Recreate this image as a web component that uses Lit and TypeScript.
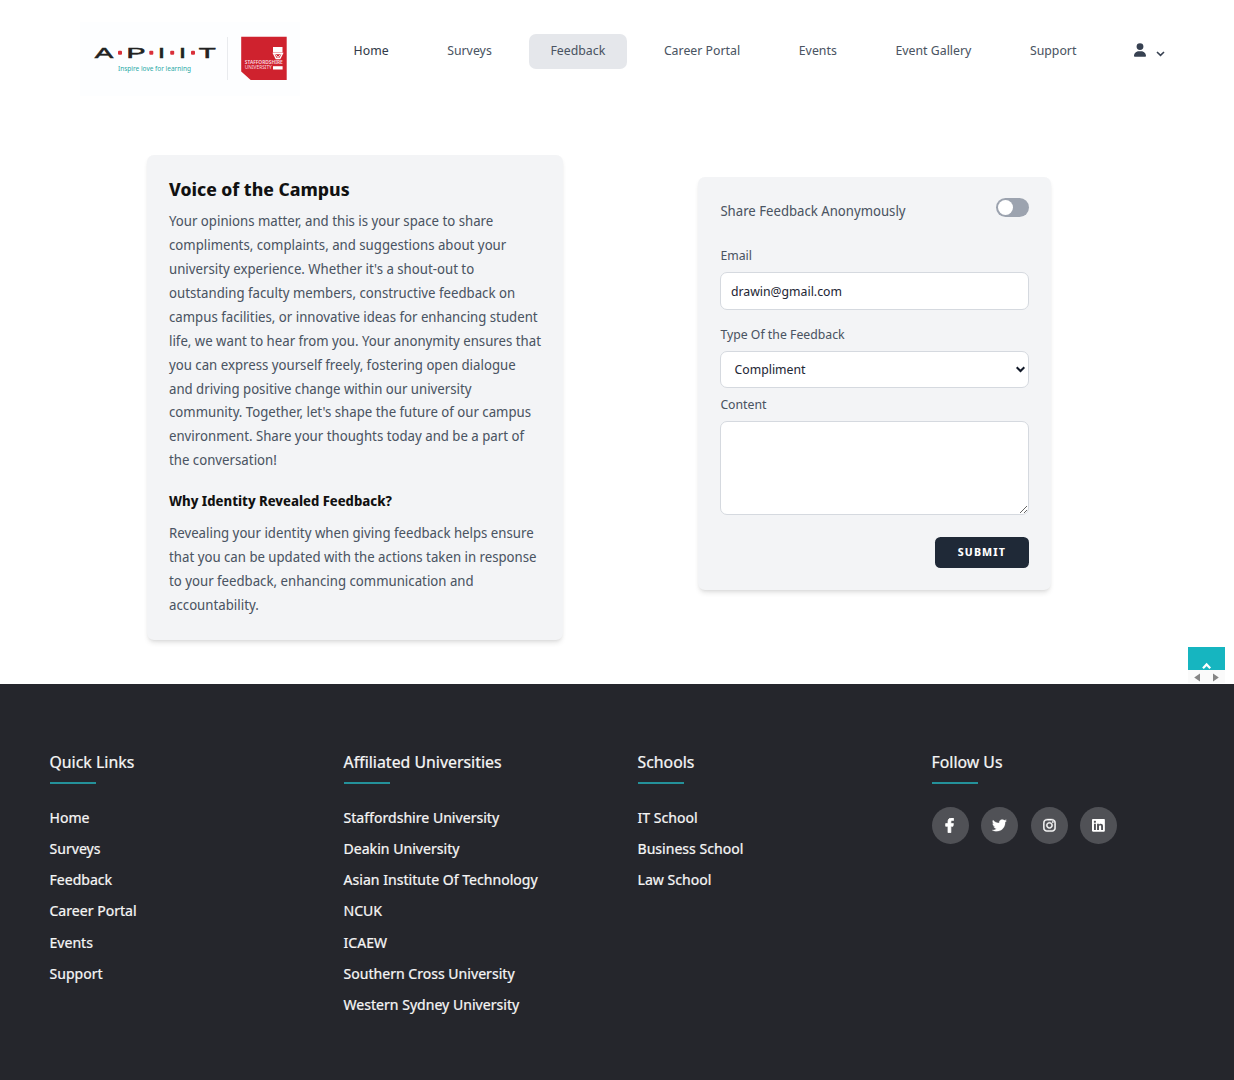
import { LitElement, html, css, svg } from "lit";
import { customElement, property } from "lit/decorators.js";
import { classMap } from "lit/directives/class-map.js";

const NAV = ["Home", "Surveys", "Feedback", "Career Portal", "Events", "Event Gallery", "Support"];

const FOOTER = [
  { title: "Quick Links", links: ["Home", "Surveys", "Feedback", "Career Portal", "Events", "Support"] },
  {
    title: "Affiliated Universities",
    links: [
      "Staffordshire University",
      "Deakin University",
      "Asian Institute Of Technology",
      "NCUK",
      "ICAEW",
      "Southern Cross University",
      "Western Sydney University",
    ],
  },
  { title: "Schools", links: ["IT School", "Business School", "Law School"] },
];

const SOCIAL = [
  {
    name: "Facebook",
    box: "0 0 320 512",
    weight: 26,
    d: "M279.14 288l14.22-92.66h-88.91v-60.13c0-25.35 12.42-50.06 52.24-50.06h40.42V6.26S260.43 0 225.36 0c-73.22 0-121.08 44.38-121.08 124.72v70.62H22.89V288h81.39v224h100.17V288z",
  },
  {
    name: "Twitter",
    box: "0 0 512 512",
    weight: 6,
    d: "M459.37 151.716c.325 4.548.325 9.097.325 13.645 0 138.72-105.583 298.558-298.558 298.558-59.452 0-114.68-17.219-161.137-47.106 8.447.974 16.568 1.299 25.34 1.299 49.055 0 94.213-16.568 130.274-44.832-46.132-.975-84.792-31.188-98.112-72.772 6.498.974 12.995 1.624 19.818 1.624 9.421 0 18.843-1.3 27.614-3.573-48.081-9.747-84.143-51.98-84.143-102.985v-1.299c13.969 7.797 30.214 12.67 47.431 13.319-28.264-18.843-46.781-51.005-46.781-87.391 0-19.492 5.197-37.36 14.294-52.954 51.655 63.675 129.3 105.258 216.365 109.807-1.624-7.797-2.599-15.918-2.599-24.04 0-57.828 46.782-104.934 104.934-104.934 30.213 0 57.502 12.67 76.67 33.137 23.715-4.548 46.456-13.32 66.599-25.34-7.798 24.366-24.366 44.833-46.132 57.827 21.117-2.273 41.584-8.122 60.426-16.243-14.292 20.791-32.161 39.308-52.628 54.253z",
  },
  {
    name: "Instagram",
    box: "-8 -8 464 528",
    weight: 16,
    d: "M224.1 141c-63.6 0-114.9 51.3-114.9 114.9s51.3 114.9 114.9 114.9S339 319.5 339 255.9 287.7 141 224.1 141zm0 189.6c-41.1 0-74.7-33.5-74.7-74.7s33.5-74.7 74.7-74.7 74.7 33.5 74.7 74.7-33.6 74.7-74.7 74.7zm146.4-194.3c0 14.9-12 26.8-26.8 26.8-14.9 0-26.8-12-26.8-26.8s12-26.8 26.8-26.8 26.8 12 26.8 26.8zm76.1 27.2c-1.7-35.9-9.9-67.7-36.2-93.9-26.2-26.2-58-34.4-93.9-36.2-37-2.1-147.9-2.1-184.9 0-35.8 1.7-67.6 9.9-93.9 36.1s-34.4 58-36.2 93.9c-2.1 37-2.1 147.9 0 184.9 1.7 35.9 9.9 67.7 36.2 93.9s58 34.4 93.9 36.2c37 2.1 147.9 2.1 184.9 0 35.9-1.7 67.7-9.9 93.9-36.2 26.2-26.2 34.4-58 36.2-93.9 2.1-37 2.1-147.8 0-184.8zM398.8 388c-7.8 19.6-22.9 34.7-42.6 42.6-29.5 11.7-99.5 9-132.1 9s-102.7 2.6-132.1-9c-19.6-7.8-34.7-22.9-42.6-42.6-11.7-29.5-9-99.5-9-132.1s-2.6-102.7 9-132.1c7.8-19.6 22.9-34.7 42.6-42.6 29.5-11.7 99.5-9 132.1-9s102.7-2.6 132.1 9c19.6 7.8 34.7 22.9 42.6 42.6 11.7 29.5 9 99.5 9 132.1s2.7 102.7-9 132.1z",
  },
  {
    name: "LinkedIn",
    box: "0 0 448 512",
    weight: 0,
    d: "M416 32H31.9C14.3 32 0 46.5 0 64.3v383.4C0 465.5 14.3 480 31.9 480H416c17.6 0 32-14.5 32-32.3V64.3c0-17.8-14.4-32.3-32-32.3zM135.4 416H69V202.2h66.5V416zm-33.2-243c-21.3 0-38.5-17.3-38.5-38.5S80.9 96 102.2 96c21.2 0 38.5 17.3 38.5 38.5 0 21.3-17.2 38.5-38.5 38.5zm282.1 243h-66.4V312c0-24.8-.5-56.7-34.5-56.7-34.6 0-39.9 27-39.9 54.9V416h-66.4V202.2h63.7v29.2h.9c8.9-16.8 30.6-34.5 62.9-34.5 67.2 0 79.7 44.3 79.7 101.9V416z",
  },
];

@customElement("site-logo")
class SiteLogo extends LitElement {
  static styles = css`
    :host { display: block; width: 220px; height: 74px; }
    svg { display: block; }
    .mark { font: 400 14.6px "Liberation Sans", sans-serif; fill: #222; stroke: #222; stroke-width: 0.5px; }
    .tag { font: 400 6.8px "Noto Sans", sans-serif; fill: #2aa9a6; }
    .uni { font: 600 4.5px "Noto Sans", sans-serif; fill: #fbdfe1; }
    .light { font-weight: 400; }
  `;
  render() {
    const letters: [string, number, number][] = [["A", 14.8, 18.5], ["P", 46.5, 19], ["I", 78, 7], ["I", 99, 7], ["T", 118.8, 17]];
    return html`<svg width="220" height="74" viewBox="0 0 220 74" role="img" aria-label="APIIT">
      <rect width="220" height="74" fill="#fdfeff" />
      ${letters.map(
        ([c, x, w]) => svg`<text class="mark" x=${x} y="36" textLength=${w} lengthAdjust="spacingAndGlyphs">${c}</text>`
      )}
      ${[40, 71.3, 92.2, 113].map((x) => svg`<rect x=${x - 2} y="28.8" width="4" height="4" rx="1" fill="#d9303a" />`)}
      <text class="tag" x="38" y="48.9" textLength="73" lengthAdjust="spacingAndGlyphs">Inspire love for learning</text>
      <path d="M147.5 15v43" stroke="#e9ebee" />
      <path d="M161.2 14.8h45.5v43.3h-36l-9.5-8.7z" fill="#cf222e" />
      <path d="M193 25h9.5v5.5H193z" fill="#fff" />
      <path d="M193.5 31.5h9l-2.6 5h-3.8z" fill="none" stroke="#fff" stroke-width="1.3" />
      <path d="M195.5 32.5l2.5 3 2.5-3" fill="none" stroke="#fff" />
      <path d="M193 44.2h9.6v3.3H193z" fill="#fff" />
      <text class="uni" x="164.8" y="42.4" textLength="38" lengthAdjust="spacingAndGlyphs">STAFFORDSHIRE</text>
      <text class="uni light" x="164.8" y="47.4" textLength="27" lengthAdjust="spacingAndGlyphs">UNIVERSITY</text>
    </svg>`;
  }
}

@customElement("site-header")
class SiteHeader extends LitElement {
  @property() active = "Feedback";
  static styles = css`
    :host { display: flex; align-items: flex-start; padding: 22px 0 0 80px; height: 133px; box-sizing: border-box; }
    nav { display: flex; margin: 12px 0 0 31.7px; gap: 14.8px; }
    a { height: 35px; line-height: 33px; padding: 0 21.9px; border-radius: 7px; font-size: 13.05px; color: #4b5563; white-space: nowrap; }
    .first { color: #333c4a; }
    .on { background: #e5e7eb; }
    .user { display: flex; align-items: center; gap: 9.7px; margin: 21px 0 0 36px; }
    .chev { margin-top: 7px; }
  `;
  render() {
    return html`<site-logo></site-logo>
      <nav>
        ${NAV.map((n, i) => html`<a class=${classMap({ on: n === this.active, first: i === 0 })}>${n}</a>`)}
      </nav>
      <div class="user">
        <svg width="12" height="14" viewBox="0 0 448 512" fill="#374151">
          <path d="M224 256a128 128 0 1 0 0-256 128 128 0 0 0 0 256zm-46 48C80 304 0 384 0 482c0 16 14 30 30 30h388c16 0 30-14 30-30 0-98-80-178-178-178z" />
        </svg>
        <svg class="chev" width="9" height="6" viewBox="0 0 9 6" fill="none" stroke="#374151" stroke-width="1.6"><path d="M1 1l3.5 3.3L8 1" /></svg>
      </div>`;
  }
}

@customElement("campus-info")
class CampusInfo extends LitElement {
  static styles = css`
    :host { display: block; box-sizing: border-box; width: 416px; height: 485px; padding: 21px 20px 0 21.7px; background: #f3f4f6; border-radius: 7px;
      box-shadow: 0 3.7px 5.5px -1px rgba(0, 0, 0, 0.1), 0 1.8px 3.7px -2px rgba(0, 0, 0, 0.1); }
    h1, h2, p { margin: 0; }
    h1 { font-size: 18.65px; line-height: 26px; color: #111; }
    p { font-size: 14px; line-height: 23.9px; color: #4b5563; margin-top: 7.2px; }
    h2 { font-size: 13.9px; line-height: 22px; color: #111; margin-top: 17.4px; }
    h2 + p { margin-top: 9.9px; }
  `;
  render() {
    return html`<h1>Voice of the Campus</h1>
      <p>
        Your opinions matter, and this is your space to share<br />compliments, complaints, and suggestions about your<br />university
        experience. Whether it's a shout-out to<br />outstanding faculty members, constructive feedback on<br />campus facilities, or
        innovative ideas for enhancing student<br />life, we want to hear from you. Your anonymity ensures that<br />you can express
        yourself freely, fostering open dialogue<br />and driving positive change within our university<br />community. Together,
        let's shape the future of our campus<br />environment. Share your thoughts today and be a part of<br />the conversation!
      </p>
      <h2>Why Identity Revealed Feedback?</h2>
      <p>
        Revealing your identity when giving feedback helps ensure<br />that you can be updated with the actions taken in response<br />to
        your feedback, enhancing communication and<br />accountability.
      </p>`;
  }
}

@customElement("feedback-form")
class FeedbackForm extends LitElement {
  static styles = css`
    :host { display: flex; flex-direction: column; box-sizing: border-box; width: 352.5px; height: 413px; padding: 21px 22px 22px; background: #f3f4f6; border-radius: 7px;
      box-shadow: 0 3.7px 5.5px -1px rgba(0, 0, 0, 0.1), 0 1.8px 3.7px -2px rgba(0, 0, 0, 0.1); }
    .top { display: flex; justify-content: space-between; font-size: 13.96px; line-height: 26px; color: #4b5563; }
    .switch { box-sizing: border-box; width: 33px; height: 19px; padding: 2px; border-radius: 10px; background: #9ca3af; }
    .knob { width: 15px; height: 15px; border-radius: 50%; background: #fff; }
    label { display: block; font-size: 13px; line-height: 20px; color: #4b5563; }
    .l1 { margin-top: 21px; }
    .l2 { margin-top: 14px; }
    .l3 { margin-top: 6px; }
    .field { box-sizing: border-box; width: 308.5px; border: 1px solid #d5d9df; border-radius: 7px; background: #fff; color: #1f2937; font: 13px "Noto Sans Display", "Noto Sans", sans-serif; display: block; outline: 0; }
    .email { height: 38px; padding: 0 9.5px; margin-top: 7px; }
    .pick { display: flex; align-items: center; justify-content: space-between; height: 37px; padding: 0 3px 0 13.2px; margin-top: 7px; }
    .area { height: 94px; margin-top: 7px; padding: 8px; }
    button { align-self: flex-end; width: 94px; height: 31.5px; margin-top: 22px; border: 0; border-radius: 5.5px; background: #1f2937; color: #fff; font: 700 11.2px "Noto Sans Display", "Noto Sans", sans-serif; letter-spacing: 1.1px; padding: 0 0 1px; }
  `;
  render() {
    return html`<div class="top"><span>Share Feedback Anonymously</span><div class="switch"><div class="knob"></div></div></div>
      <label class="l1">Email</label>
      <input class="field email" .value=${"drawin@gmail.com"} />
      <label class="l2">Type Of the Feedback</label>
      <div class="field pick">
        <span>Compliment</span>
        <svg width="9" height="7" viewBox="0 0 9 7" fill="none" stroke="#111827" stroke-width="2"><path d="M0.7 1.2l3.8 3.8 3.8-3.8" /></svg>
      </div>
      <label class="l3">Content</label>
      <textarea class="field area"></textarea>
      <button>SUBMIT</button>`;
  }
}

@customElement("site-footer")
class SiteFooter extends LitElement {
  static styles = css`
    :host { display: grid; grid-template-columns: repeat(4, 294px); box-sizing: border-box; height: 396px; padding: 63.5px 0 0 49.5px; background: #25262c; color: #f5f5f5; -webkit-text-stroke: 0.2px #f5f5f5; }
    h3 { margin: 0; font-weight: 400; font-size: 16.8px; line-height: 27px; }
    h3::after { content: ""; display: block; width: 46px; height: 2px; margin-top: 7.5px; background: #24919a; }
    ul { list-style: none; margin: 17.6px 0 0; padding: 0; }
    li { font-size: 14.92px; line-height: 31.25px; }
    .social { display: flex; gap: 12.6px; margin-top: 23px; }
    .dot { display: grid; place-items: center; width: 37px; height: 37px; border-radius: 50%; background: #505156; }
  `;
  render() {
    return html`${FOOTER.map(
        (c) => html`<section><h3>${c.title}</h3><ul>${c.links.map((l) => html`<li>${l}</li>`)}</ul></section>`
      )}
      <section>
        <h3>Follow Us</h3>
        <div class="social">
          ${SOCIAL.map(
            (s) => html`<a class="dot" aria-label=${s.name}><svg height="14.7" viewBox=${s.box} fill="#fff" stroke="#fff" stroke-width=${s.weight}><path d=${s.d} /></svg></a>`
          )}
        </div>
      </section>`;
  }
}

@customElement("app-root")
class AppRoot extends LitElement {
  static styles = css`
    :host { display: block; position: relative; height: 1080px; overflow: hidden; background: #fff; font-family: "Noto Sans Display", "Noto Sans", sans-serif; }
    main { display: flex; align-items: flex-start; box-sizing: border-box; height: 551px; padding: 22px 0 0 147.3px; }
    feedback-form { margin: 22px 0 0 135.1px; }
    .totop { position: absolute; left: 1188px; top: 647px; width: 37px; height: 36px; }
    .totop svg { display: block; }
  `;
  render() {
    return html`<site-header></site-header>
      <main><campus-info></campus-info><feedback-form></feedback-form></main>
      <site-footer></site-footer>
      <div class="totop">
        <svg width="37" height="36" viewBox="0 0 37 36">
          <rect width="37" height="36" fill="#fafafa" />
          <rect width="37" height="23" fill="#16b5c0" />
          <path d="M15 21.2l3.6-3.7 3.6 3.7" fill="none" stroke="#fff" stroke-width="2.3" />
          <path d="M12 26.5v8l-5.8-4zM25 26.5v8l5.8-4z" fill="#858585" />
        </svg>
      </div>`;
  }
}
